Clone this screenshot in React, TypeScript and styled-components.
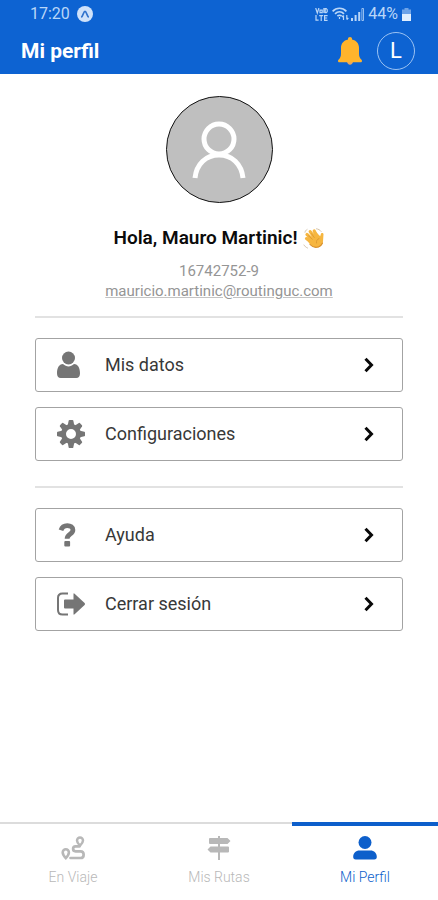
import React from "react";
import styled, { createGlobalStyle } from "styled-components";

const Global = createGlobalStyle`
  * { box-sizing: border-box; }
  body { margin: 0; background: #fff; font-family: Roboto, "Liberation Sans", sans-serif; }
  button { font-family: inherit; }
  svg { display: block; flex: none; }
`;

const Screen = styled.div`
  min-height: 100vh;
  display: flex;
  flex-direction: column;
`;

const Header = styled.header`
  background: #0d63d2;
  color: #fff;
`;

const StatusBar = styled.div`
  height: 28px;
  padding: 0 27px 0 30px;
  display: flex;
  align-items: center;
  justify-content: space-between;
  font-size: 16px;
  line-height: 28px;
  color: #b9d6f8;
`;

const StatusGroup = styled.div<{ $gap: number }>`
  display: flex;
  align-items: center;
  gap: ${(p) => p.$gap}px;
`;

const TitleBar = styled.div`
  height: 46px;
  padding: 0 23px 0 21px;
  display: flex;
  align-items: center;
  justify-content: space-between;
`;

const Title = styled.h1`
  margin: 0;
  font-size: 21px;
  line-height: 24px;
  font-weight: 700;
`;

const Actions = styled.div`
  display: flex;
  align-items: center;
  gap: 15px;
`;

const BellButton = styled.button`
  border: 0;
  padding: 0;
  background: none;
  cursor: pointer;
`;

const Initial = styled.button`
  width: 38px;
  height: 38px;
  padding: 0;
  border: 1px solid #9cc3f3;
  border-radius: 50%;
  background: none;
  color: #fff;
  font-size: 22px;
  line-height: 36px;
  cursor: pointer;
`;

const Main = styled.main`
  flex: 1;
  padding: 22px 35px 20px;
`;

const Profile = styled.section`
  display: flex;
  flex-direction: column;
  align-items: center;
  padding-bottom: 15px;
`;

const Avatar = styled.div`
  width: 107px;
  height: 107px;
  border: 1px solid #111;
  border-radius: 50%;
  background: #bfbfbf;
  display: flex;
  align-items: center;
  justify-content: center;
`;

const Greeting = styled.h2`
  margin: 23px 0 11px;
  display: flex;
  align-items: center;
  gap: 5px;
  font-size: 19px;
  line-height: 24px;
  font-weight: 600;
  color: #0b0b0b;
`;

const Detail = styled.div`
  font-size: 15px;
  line-height: 20px;
  color: #959595;
`;

const Mail = styled.a`
  font-size: 15px;
  line-height: 20px;
  color: #959595;
  text-decoration: underline;
  text-decoration-color: #c4c4c4;
`;

const Divider = styled.hr`
  margin: 0;
  height: 2px;
  border: 0;
  background: #e2e2e2;
`;

const Menu = styled.div`
  display: flex;
  flex-direction: column;
  gap: 15px;
  padding: 20px 0 25px;
`;

const MenuButton = styled.button`
  height: 54px;
  width: 100%;
  padding: 0 28px 0 20px;
  border: 1px solid #a3a3a3;
  border-radius: 3px;
  background: #fff;
  display: flex;
  align-items: center;
  text-align: left;
  cursor: pointer;
`;

const IconSlot = styled.span`
  width: 49px;
`;

const MenuLabel = styled.span`
  flex: 1;
  font-size: 18px;
  line-height: 24px;
  color: #383838;
`;

const TabBar = styled.nav`
  display: grid;
  grid-template-columns: repeat(3, 1fr);
`;

const Tab = styled.button<{ $active?: boolean }>`
  height: 78px;
  padding: ${(p) => (p.$active ? 10 : 12)}px 0 0;
  border: 0;
  border-top: ${(p) => (p.$active ? "4px solid #0d5fcb" : "2px solid #dcdcdc")};
  background: #fff;
  color: ${(p) => (p.$active ? "#0d5fcb" : "#b8b8b8")};
  display: flex;
  flex-direction: column;
  align-items: center;
  gap: 9px;
  font-size: 14px;
  font-weight: 300;
  line-height: 16px;
  cursor: pointer;
`;

const AppDot = () => (
  <svg width="16" height="16" viewBox="0 0 16 16">
    <circle cx="8" cy="8" r="8" fill="#cfe2fa" />
    <path d="M4.8 10.8C6 9.2 6.8 5.4 8 5.4s2 3.8 3.2 5.4" fill="none" stroke="#2f72cc" strokeWidth="1.7" strokeLinecap="round" />
  </svg>
);

const VoLte = () => (
  <svg width="13" height="13" viewBox="0 0 13 13" fill="none" stroke="#b9d6f8" strokeWidth="1.2">
    <path d="M.7 0 2.3 5 3.9 0M5 2.2h2.2v2.4H5zM8.9 0v5M10.2.7h1l1 1v2l-1 1h-1z" />
    <path d="M1 7v5.2h2.6M4.2 7.6h4M6.2 7.6V13M12.6 7.6H9.6v4.8h3M9.6 10h2.6" />
  </svg>
);

const Wifi = () => (
  <svg width="17" height="14" viewBox="0 0 17 14" fill="none" stroke="#b9d6f8" strokeWidth="1.7">
    <path d="M.6 4.3C4.6.2 10.4.2 14.4 4.3M3 6.8c2.7-2.7 6.3-2.7 9 0M5.4 9.200c1.300-1.300 2.900-1.300 4.200 0" />
    <path d="M7.500 10v2M11.500 13V8.600M10 10l1.500-1.700M14.800 8v4.400M16.300 11l-1.500 1.700" strokeWidth="1.200" />
  </svg>
);

const Signal = () => (
  <svg width="13" height="13" viewBox="0 0 13 13" fill="#b9d6f8">
    <path d="M0 10h2v3H0zM3.600 7h2v6h-2zM7.200 4h2v9h-2z" />
    <path d="M10.900 .5h1.600v12h-1.600z" fill="none" stroke="#b9d6f8" strokeWidth=".8" />
  </svg>
);

const Battery = () => (
  <svg width="9" height="13" viewBox="0 0 9 13">
    <path d="M2.500 0h4v1.600H9V13H0V1.600h2.500z" fill="#6da3e8" />
    <path d="M0 6h9v7H0z" fill="#e1effe" />
  </svg>
);

const Bell = () => (
  <svg width="24" height="28" viewBox="0 0 24 28">
    <path d="M9 24h6c0 5-6 5-6 0z" fill="#e8a762" />
    <path d="M12 0c-1.200 0-2 .8-2 1.800v.7C5.500 3.300 3 6.700 3 10.800v5.800c0 3-.7 4.500-2.500 6.200-.9.900-.5 2.500.9 2.500h21.200c1.400 0 1.800-1.600.9-2.500-1.800-1.700-2.500-3.200-2.500-6.200v-5.800c0-4.100-2.500-7.500-7-8.300v-.7C14 .8 13.200 0 12 0z" fill="#ffb42c" />
  </svg>
);

const Person = () => (
  <svg width="54" height="58" viewBox="0 0 54 58" fill="none" stroke="#fff" strokeWidth="5">
    <circle cx="27" cy="18" r="15" />
    <path d="M3 57c1.500-14 11-23 24-23s22.500 9 24 23" />
  </svg>
);

const Wave = () => (
  <svg width="22" height="21" viewBox="0 0 22 21" fill="none" strokeLinecap="round">
    <path d="M4.500 20C3 19.400 1.800 18.400 1 17M13.500.8c2 .3 3.500 1.200 4.600 2.600M2 4.200C2.300 3 3 2 4 1.500" stroke="#d3c1a8" strokeWidth="1" />
    <path d="M5 13c2 4.500 5.500 7 9.200 6.500 4-.5 6-4.200 5.900-7.500l.4-5.700c0-1.700-2.500-1.800-2.700 0l-.6 2L13 4z" fill="#f6b640" />
    <path d="M8.500 14.500 3.500 10.600M10 12 4 6.500M12 10.300 7.200 3.600M14.500 9.500 11.200 3" stroke="#f6b640" strokeWidth="3.200" />
    <path d="M9.300 11.200 5.500 7.800M11.300 9.500 8.500 5.700M13.500 15c-.3-2.200.6-3.700 2.500-4.500" stroke="#d48f2c" strokeWidth=".7" />
    <path d="M7 16.500c3.500 4 10 4 12.500-1.500" stroke="#d68d2a" strokeWidth="1.100" />
  </svg>
);

const UserIcon = () => (
  <svg width="26" height="28" viewBox="0 0 26 28" fill="#757575">
    <circle cx="12.500" cy="7" r="6.500" />
    <path d="M7 13c3.500 3.300 7.500 3.300 11 0 4.200.3 6 4.300 6 9.200 0 3-1.200 4.800-3.800 4.800H4.800C2.200 27 1 25.200 1 22.200 1 17.300 2.800 13.300 7 13z" />
  </svg>
);

const Gear = () => (
  <svg width="30" height="28" viewBox="-15 -14 30 28">
    <g fill="#757575">
      {[0, 45, 90, 135, 180, 225, 270, 315].map((a) => (
        <path key={a} d="M-3.400-8-2.300-13.400q.2-.6.800-.6h3q.6 0 .8.600L3.400-8z" transform={`rotate(${a})`} />
      ))}
    </g>
    <circle r="7.500" fill="none" stroke="#757575" strokeWidth="5" />
  </svg>
);

const Question = () => (
  <svg width="24" height="24" viewBox="0 0 24 24">
    <path d="M5 7.200C6 4 8.300 2.600 11.300 2.600c3.200 0 5.600 1.700 5.600 4.300 0 4.300-5.800 4.200-5.800 8.800" fill="none" stroke="#757575" strokeWidth="4.800" />
    <rect x="8.300" y="18" width="5.800" height="5.500" rx="1" fill="#757575" />
  </svg>
);

const Logout = () => (
  <svg width="30" height="24" viewBox="0 0 30 24">
    <path d="M12 1.500H6.500Q2 1.500 2 6v12q0 4.500 4.500 4.500H12" fill="none" stroke="#757575" strokeWidth="2" />
    <path d="M9 7.500h8.500V2.200q0-1.400 1.100-.5l10 9.300q.9 1 0 2l-10 9.300q-1.100.9-1.100-.5v-5.300H9q-1 0-1-1v-7q0-1 1-1z" fill="#757575" />
  </svg>
);

const Chevron = () => (
  <svg width="10" height="16" viewBox="0 0 10 16">
    <path d="m1.500 1.800 6 6.200-6 6.200" fill="none" stroke="#080808" strokeWidth="3" />
  </svg>
);

const RouteIcon = () => (
  <svg width="24" height="24" viewBox="0 0 24 24" fill="none" stroke="currentColor">
    <path d="M4.800 13.300a3.100 3.100 0 0 1 3.100 3.100c0 1.900-1.700 4.100-3.100 5.600-1.400-1.500-3.100-3.700-3.100-5.600a3.100 3.100 0 0 1 3.100-3.100z" strokeWidth="2.600" />
    <path d="M19 1.500a3 3 0 0 1 3 3c0 1.800-1.600 3.800-3 5.200-1.400-1.400-3-3.400-3-5.200a3 3 0 0 1 3-3z" strokeWidth="2.500" />
    <path d="M18.500 10.300h-4c-3.200 0-3.200 5 0 5h5c4.200 0 4.200 6.700 0 6.700H9.500" strokeWidth="2.700" strokeLinecap="round" />
  </svg>
);

const SignsIcon = () => (
  <svg width="24" height="24" viewBox="0 0 24 24" fill="currentColor">
    <path d="M11 0h2v24h-2z" />
    <path d="M3 2h17.500L23.500 5l-3 3H3Q2 8 2 7V3q0-1 1-1zM21 10.500H3.500L.5 13.500l3 3H21q1 0 1-1v-4q0-1-1-1z" />
  </svg>
);

const ProfileIcon = () => (
  <svg width="24" height="24" viewBox="0 0 24 24" fill="currentColor">
    <circle cx="12" cy="6.500" r="6.500" />
    <path d="M6.500 14.500h11c3.600 0 6.300 2.600 6.300 6.200 0 1.800-.8 2.800-2.500 2.800H2.700C1 23.500.2 22.500.2 20.700c0-3.600 2.700-6.200 6.300-6.200z" />
  </svg>
);

const groups = [
  [
    { label: "Mis datos", icon: <UserIcon /> },
    { label: "Configuraciones", icon: <Gear /> },
  ],
  [
    { label: "Ayuda", icon: <Question /> },
    { label: "Cerrar sesión", icon: <Logout /> },
  ],
];

const tabs = [
  { label: "En Viaje", icon: <RouteIcon /> },
  { label: "Mis Rutas", icon: <SignsIcon /> },
  { label: "Mi Perfil", icon: <ProfileIcon />, active: true },
];

export default function App() {
  return (
    <Screen>
      <Global />
      <Header>
        <StatusBar>
          <StatusGroup $gap={7}>
            <span>17:20</span>
            <AppDot />
          </StatusGroup>
          <StatusGroup $gap={4}>
            <VoLte />
            <StatusGroup $gap={2}>
              <Wifi />
              <Signal />
            </StatusGroup>
            <span>44%</span>
            <Battery />
          </StatusGroup>
        </StatusBar>
        <TitleBar>
          <Title>Mi perfil</Title>
          <Actions>
            <BellButton aria-label="Notificaciones">
              <Bell />
            </BellButton>
            <Initial>L</Initial>
          </Actions>
        </TitleBar>
      </Header>
      <Main>
        <Profile>
          <Avatar>
            <Person />
          </Avatar>
          <Greeting>
            Hola, Mauro Martinic! <Wave />
          </Greeting>
          <Detail>16742752-9</Detail>
          <Mail href="mailto:mauricio.martinic@routinguc.com">mauricio.martinic@routinguc.com</Mail>
        </Profile>
        {groups.map((items, i) => (
          <React.Fragment key={i}>
            <Divider />
            <Menu>
              {items.map((it) => (
                <MenuButton key={it.label}>
                  <IconSlot>{it.icon}</IconSlot>
                  <MenuLabel>{it.label}</MenuLabel>
                  <Chevron />
                </MenuButton>
              ))}
            </Menu>
          </React.Fragment>
        ))}
      </Main>
      <TabBar>
        {tabs.map((t) => (
          <Tab key={t.label} $active={t.active} aria-current={t.active ? "page" : undefined}>
            {t.icon}
            {t.label}
          </Tab>
        ))}
      </TabBar>
    </Screen>
  );
}
